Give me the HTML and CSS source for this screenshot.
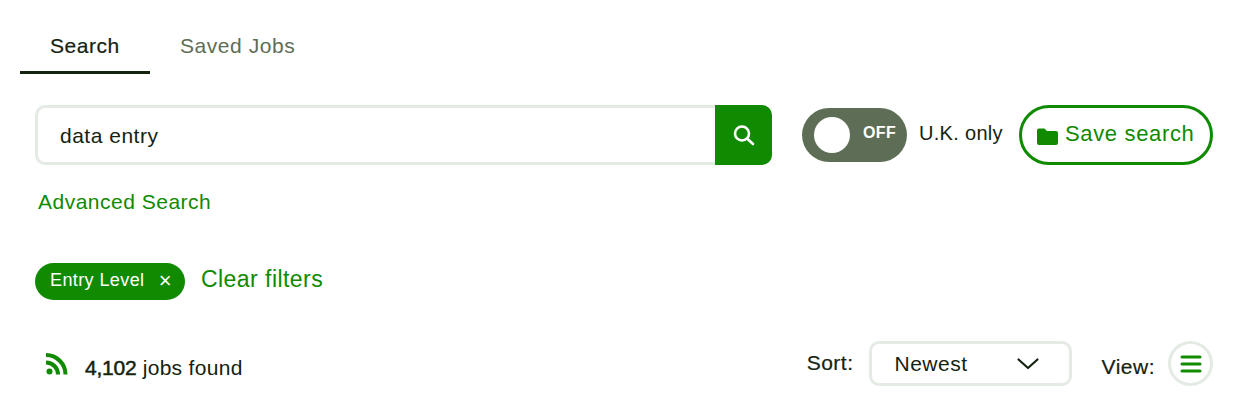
FILE: index.html
```html
<!DOCTYPE html>
<html lang="en">
<head>
	<meta charset="UTF-8">
	<title>Job search</title>
	<link rel="stylesheet" href="styles.css">
</head>
<body>
	<nav class="tabs">
		<a class="tab tab-active">Search</a>
		<a class="tab">Saved Jobs</a>
	</nav>

	<div class="search-row">
		<div class="search-box">
			<div class="search-input">data entry</div>
			<button class="search-btn" aria-label="Search">
				<svg width="24" height="24" viewBox="0 0 24 24" fill="none" stroke="#fff" stroke-width="2.6" stroke-linecap="round">
					<circle cx="10" cy="10.5" r="7"/>
					<path d="M15.500 16l5.500 5"/>
				</svg>
			</button>
		</div>
		<div class="toggle">
			<span class="toggle-knob"></span>
			<span class="toggle-text">OFF</span>
		</div>
		<span class="toggle-label">U.K. only</span>
		<button class="save-btn">
			<svg class="save-icon" width="21" height="17" viewBox="0 0 21 17" fill="#108a00">
				<path d="M0 2.500a2 2 0 0 1 2-2h5.500l2.500 2.500H19a2 2 0 0 1 2 2v10a2 2 0 0 1-2 2H2a2 2 0 0 1-2-2z"/>
			</svg>
			Save search
		</button>
	</div>

	<a class="advanced">Advanced Search</a>

	<div class="filters">
		<span class="chip">Entry Level <span class="chip-x">&times;</span></span>
		<a class="clear">Clear filters</a>
	</div>

	<div class="results">
		<div class="found">
			<svg width="22" height="22" viewBox="0 0 22 22" fill="none" stroke="#108a00" stroke-width="4">
				<circle cx="3.500" cy="18.500" r="3" fill="#108a00" stroke="none"/>
				<path d="M0 9.500a12 12 0 0 1 12 12"/>
				<path d="M0 2a19.500 19.500 0 0 1 19.500 19.500"/>
			</svg>
			<span class="found-text"><span class="found-count">4,102</span> jobs found</span>
		</div>
		<div class="sort">
			<span class="sort-label">Sort:</span>
			<div class="sort-select">
				Newest
				<svg width="24" height="14" viewBox="0 0 24 14" fill="none" stroke="#14230f" stroke-width="2.200" stroke-linecap="round" stroke-linejoin="round">
					<path d="M2.500 2.500L12 11l9.500-8.500"/>
				</svg>
			</div>
			<span class="view-label">View:</span>
			<button class="view-btn" aria-label="List view">
				<svg width="22" height="18" viewBox="0 0 22 18" stroke="#108a00" stroke-width="3" stroke-linecap="round">
					<path d="M2 2h18M2 9h18M2 16h18"/>
				</svg>
			</button>
		</div>
	</div>
</body>
</html>
```

FILE: styles.css
```css
* {
	box-sizing: border-box;
	margin: 0;
	padding: 0;
}

body {
	font-family: "Liberation Sans", Arial, sans-serif;
	color: #14230f;
	background: #fff;
	width: 1244px;
	height: 416px;
	overflow: hidden;
	padding: 20px 31px 0 20px;
}

button {
	font-family: inherit;
	cursor: pointer;
}

/* Tabs */
.tabs {
	display: flex;
	height: 54px;
}

.tab {
	padding: 14px 30px 0;
	font-size: 21px;
	letter-spacing: 0.55px;
	color: #5e6d55;
}

.tab-active {
	width: 130px;
	color: #14230f;
	-webkit-text-stroke: 0.2px #14230f;
	border-bottom: 3px solid #14230f;
}

/* Search row */
.search-row {
	display: flex;
	align-items: center;
	margin: 31px 0 0 15px;
	height: 60px;
}

.search-box {
	display: flex;
	flex: none;
	width: 737px;
	height: 60px;
}

.search-input {
	flex: 1;
	border: 3px solid #e4ebe4;
	border-right: none;
	border-radius: 10px 0 0 10px;
	padding: 16px 0 0 22px;
	font-size: 21px;
	letter-spacing: 0.5px;
}

.search-btn {
	width: 57px;
	border: none;
	border-radius: 0 10px 10px 0;
	background: #108a00;
	display: flex;
	align-items: center;
	justify-content: center;
}

.toggle {
	display: flex;
	flex: none;
	align-items: center;
	justify-content: space-between;
	width: 105px;
	height: 54px;
	margin-left: 30px;
	padding: 0 11px 0 12px;
	border-radius: 27px;
	background: #5e6d55;
}

.toggle-knob {
	width: 36px;
	height: 36px;
	border-radius: 50%;
	background: #fff;
}

.toggle-text {
	margin-bottom: 4px;
	color: #fff;
	font-size: 16px;
	font-weight: bold;
	letter-spacing: 0.3px;
}

.toggle-label {
	flex: none;
	width: 100px;
	margin: 0 0 4px 12px;
	white-space: nowrap;
	font-size: 20px;
	letter-spacing: 0.3px;
}

.save-btn {
	display: flex;
	flex: none;
	align-items: center;
	gap: 7px;
	width: 194px;
	height: 60px;
	padding: 0 0 3px 15px;
	border: 3px solid #108a00;
	border-radius: 30px;
	background: #fff;
	color: #108a00;
	font-size: 22px;
	letter-spacing: 0.65px;
}

.save-icon {
	margin-top: 5px;
}

.advanced {
	display: block;
	margin: 25px 0 0 18px;
	color: #108a00;
	font-size: 21px;
	letter-spacing: 0.5px;
}

/* Filters */
.filters {
	display: flex;
	align-items: center;
	gap: 16px;
	margin: 49px 0 0 15px;
}

.chip {
	display: flex;
	align-items: center;
	justify-content: space-between;
	width: 150px;
	height: 37px;
	padding: 0 13px 2px 15px;
	border-radius: 19px;
	background: #108a00;
	color: #fff;
	font-size: 18px;
	letter-spacing: 0.4px;
}

.chip-x {
	font-size: 22px;
	font-weight: normal;
}

.clear {
	margin-bottom: 4px;
	color: #108a00;
	font-size: 23px;
	letter-spacing: 0.45px;
}

/* Results row */
.results {
	display: flex;
	justify-content: space-between;
	align-items: center;
	margin: 41px 0 0 26px;
}

.found {
	display: flex;
	align-items: center;
	gap: 17px;
}

.found svg {
	margin-top: 1px;
}

.found-text {
	margin-top: 8px;
	font-size: 21px;
	letter-spacing: 0.3px;
}

.found-count {
	-webkit-text-stroke: 0.5px #14230f;
	letter-spacing: -0.2px;
}

.sort {
	display: flex;
	align-items: center;
}

.sort-label {
	margin: 0 15px 2px 0;
	font-size: 21px;
	letter-spacing: 0.5px;
	-webkit-text-stroke: 0.2px #14230f;
}

.sort-select {
	display: flex;
	align-items: center;
	justify-content: space-between;
	width: 203px;
	height: 45px;
	padding: 0 29px 0 23px;
	border: 3px solid #e4ebe4;
	border-radius: 10px;
	font-size: 21px;
	letter-spacing: 0.5px;
}

.view-label {
	margin: 6px 13px 0 30px;
	font-size: 21px;
	letter-spacing: 0.5px;
	-webkit-text-stroke: 0.2px #14230f;
}

.view-btn {
	display: flex;
	align-items: center;
	justify-content: center;
	width: 45px;
	height: 45px;
	border: 3px solid #e4ebe4;
	border-radius: 50%;
	background: #fff;
}
```
